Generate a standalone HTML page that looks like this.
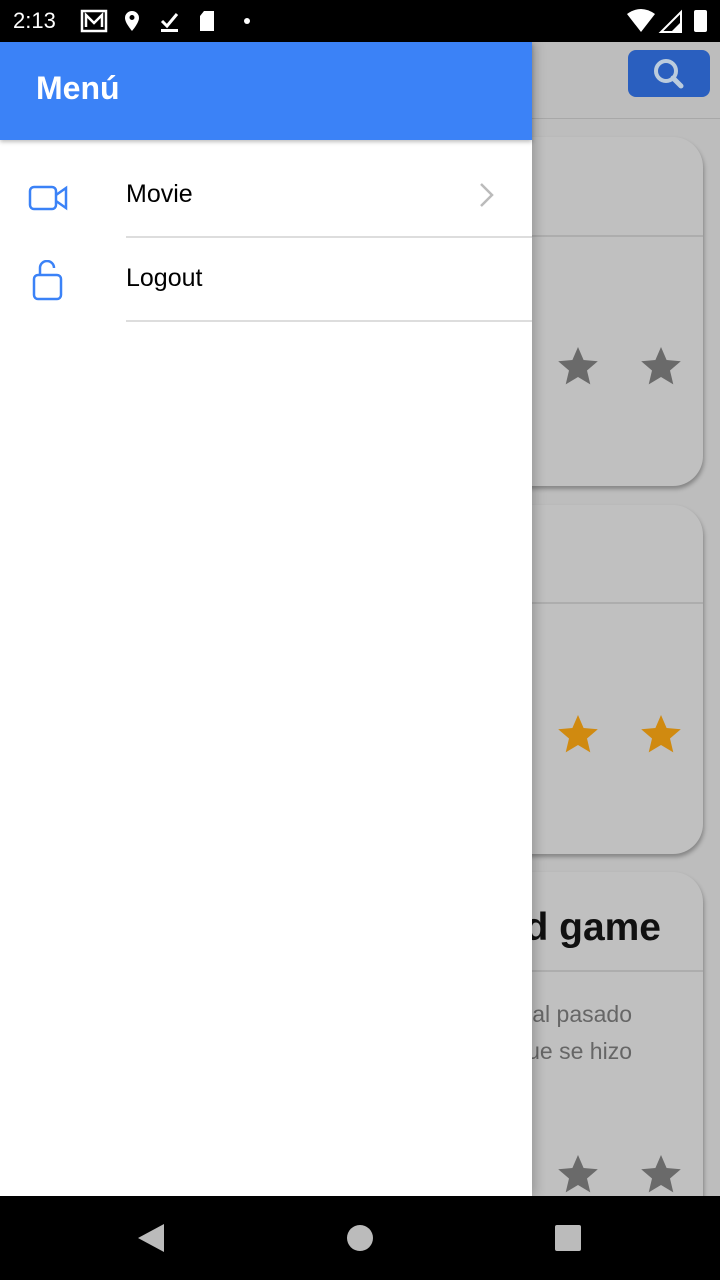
<!DOCTYPE html>
<html><head><meta charset="utf-8"><style>
*{margin:0;padding:0;box-sizing:border-box}
body{width:720px;height:1280px;position:relative;overflow:hidden;background:#bdbdbd;font-family:"Liberation Sans",sans-serif}
.abs{position:absolute}
.card{position:absolute;left:380px;width:323px;background:#c0c0c0;border-radius:30px;box-shadow:1px 3px 4px rgba(0,0,0,.3)}
.div{position:absolute;left:0;right:0;height:2px;background:#adadad}
.star{position:absolute;width:42px;height:40px}
</style></head><body>
<svg width="0" height="0" style="position:absolute"><defs><path id="s" d="M21 1l5.6 13 14.2 1.2-10.8 9.3 3.3 13.9L21 31l-12.3 7.4 3.3-13.9L1.2 15.2 15.4 14z"/></defs></svg>
<div class="abs" style="left:0;top:0;width:720px;height:42px;background:#000;color:#fff">
 <div class="abs" style="left:13px;top:8px;font-size:22px">2:13</div>
 <svg class="abs" style="left:80px;top:9px" width="180" height="26" viewBox="0 0 180 26" fill="#fff">
  <rect x="2" y="2" width="24" height="20" fill="none" stroke="#fff" stroke-width="2.5"/><path d="M6 18V6l8 8 8-8v12" fill="none" stroke="#fff" stroke-width="2.5"/>
  <path d="M52 2a7 7 0 0 0-7 7c0 5 7 13 7 13s7-8 7-13a7 7 0 0 0-7-7zm0 9a2.5 2.5 0 1 1 0-5 2.5 2.5 0 0 1 0 5z"/>
  <path d="M82 12l5 5 10-12" fill="none" stroke="#fff" stroke-width="3"/><rect x="81" y="20" width="17" height="3"/>
  <path d="M124 2h10v20h-14V7z"/><circle cx="167" cy="12" r="3"/>
 </svg>
 <svg class="abs" style="left:625px;top:8px" width="90" height="26" viewBox="0 0 90 26" fill="#fff">
  <path d="M2 6q14-10 28 0L16 24z"/><path d="M56 4v20H36z" fill="none" stroke="#fff" stroke-width="2"/><path d="M56 14v10H46z"/>
  <rect x="69" y="2" width="13" height="22" rx="2"/>
 </svg>
</div>
<div class="abs" style="left:0;top:118px;width:720px;height:1px;background:#a8a8a8"></div>
<div class="abs" style="left:628px;top:50px;width:82px;height:47px;background:#2a5fbf;border-radius:8px">
 <svg class="abs" style="left:24px;top:8px" width="34" height="32" viewBox="0 0 34 32"><circle cx="14" cy="13" r="10" fill="none" stroke="#bcd" stroke-width="4"/><path d="M21 20l8 8" stroke="#bcd" stroke-width="5" stroke-linecap="round"/></svg>
</div>
<div class="card" style="top:137px;height:349px"><div class="div" style="top:98px"></div>
 <svg class="star" style="left:177px;top:209px" viewBox="0 0 42 40" fill="#6a6a6a"><use href="#s"/></svg><svg class="star" style="left:260px;top:209px" viewBox="0 0 42 40" fill="#6a6a6a"><use href="#s"/></svg></div>
<div class="card" style="top:505px;height:349px"><div class="div" style="top:97px"></div>
 <svg class="star" style="left:177px;top:209px" viewBox="0 0 42 40" fill="#d08a10"><use href="#s"/></svg><svg class="star" style="left:260px;top:209px" viewBox="0 0 42 40" fill="#d08a10"><use href="#s"/></svg></div>
<div class="card" style="top:872px;height:400px"><div class="div" style="top:98px"></div>
 <div class="abs" style="right:42px;top:34px;font-size:39px;font-weight:bold;color:#111;white-space:nowrap">ld game</div>
 <div class="abs" style="right:71px;top:124px;font-size:23px;line-height:37px;color:#666;white-space:nowrap;text-align:right">al pasado<br>ue se hizo</div>
 <svg class="star" style="left:177px;top:282px" viewBox="0 0 42 40" fill="#6a6a6a"><use href="#s"/></svg><svg class="star" style="left:260px;top:282px" viewBox="0 0 42 40" fill="#6a6a6a"><use href="#s"/></svg></div>
<div class="abs" style="left:0;top:42px;width:532px;height:1154px;background:#fff;box-shadow:4px 0 10px rgba(0,0,0,.2)">
 <div class="abs" style="left:0;top:0;width:532px;height:98px;background:#3b82f7;box-shadow:0 2px 4px rgba(0,0,0,.25)">
  <div class="abs" style="left:36px;top:28px;font-size:32px;font-weight:bold;color:#fff">Menú</div></div>
 <svg class="abs" style="left:28px;top:142px" width="44" height="28" viewBox="0 0 44 28"><rect x="2" y="3" width="26" height="22" rx="4" fill="none" stroke="#3b82f7" stroke-width="2.5"/><path d="M28 11l10-7v20l-10-7" fill="none" stroke="#3b82f7" stroke-width="2.5"/></svg>
 <div class="abs" style="left:126px;top:138px;font-size:25px;color:#000">Movie</div>
 <svg class="abs" style="left:478px;top:140px" width="18" height="26" viewBox="0 0 18 26"><path d="M3 2l11 11L3 24" fill="none" stroke="#bbb" stroke-width="2.5"/></svg>
 <div class="abs" style="left:126px;top:194px;width:406px;height:2px;background:#ddd"></div>
 <svg class="abs" style="left:30px;top:218px" width="40" height="44" viewBox="0 0 40 44"><rect x="4" y="15" width="27" height="24" rx="4" fill="none" stroke="#3b82f7" stroke-width="2.5"/><path d="M10 15V8a7 7 0 0 1 14 0" fill="none" stroke="#3b82f7" stroke-width="2.5"/></svg>
 <div class="abs" style="left:126px;top:222px;font-size:25px;color:#000">Logout</div>
 <div class="abs" style="left:126px;top:278px;width:406px;height:2px;background:#ddd"></div>
</div>
<div class="abs" style="left:0;top:1196px;width:720px;height:84px;background:#000">
 <svg class="abs" style="left:130px;top:20px" width="460" height="44" viewBox="0 0 460 44"><path d="M34 8v28L8 22z" fill="#bbb"/><circle cx="230" cy="22" r="13" fill="#bbb"/><rect x="425" y="9" width="26" height="26" rx="2" fill="#bbb"/></svg>
</div>
</body></html>
